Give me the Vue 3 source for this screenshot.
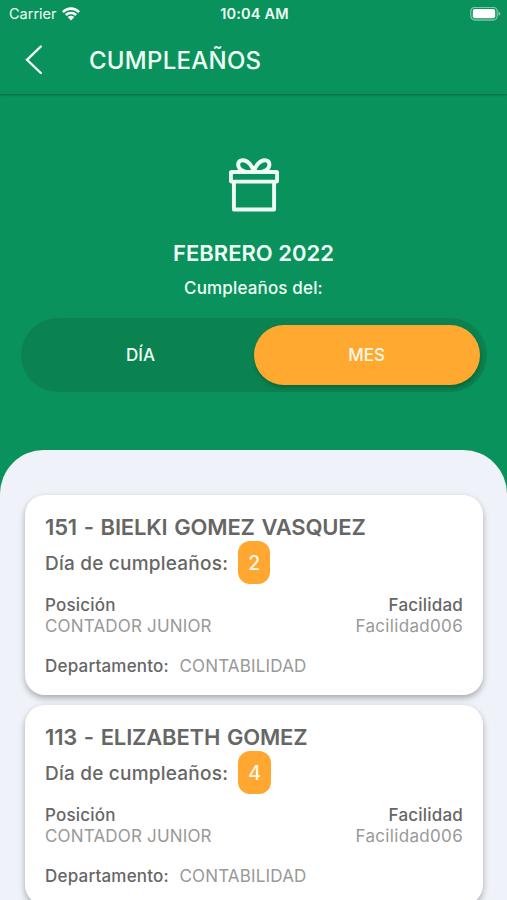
<script setup>
const people = [
  { code: '151', name: 'BIELKI GOMEZ VASQUEZ', day: 2, position: 'CONTADOR JUNIOR', facility: 'Facilidad006', department: 'CONTABILIDAD' },
  { code: '113', name: 'ELIZABETH GOMEZ', day: 4, position: 'CONTADOR JUNIOR', facility: 'Facilidad006', department: 'CONTABILIDAD' },
]
</script>

<template>
  <div class="screen">
    <header class="top">
      <div class="status">
        <div class="carrier">
          <span>Carrier</span>
          <svg class="wifi" viewBox="0 0 18 14" width="18" height="14">
            <path d="M0 4.200C5-1 13-1 18 4.200L16.200 6C12 1.900 6 1.900 1.800 6Z" />
            <path d="M2.900 7.100C6.300 3.800 11.700 3.800 15.100 7.100L13.300 8.900C10.900 6.700 7.100 6.700 4.700 8.900Z" />
            <path d="M5.700 10C7.700 8.200 10.300 8.200 12.300 10L9 13.400Z" />
          </svg>
        </div>
        <span class="time">10:04 AM</span>
        <svg class="battery" viewBox="0 0 32 14" width="32" height="14">
          <rect x="0.8" y="0.400" width="26.400" height="12.600" rx="4" class="shell" />
          <rect x="2.800" y="2.100" width="22.400" height="9.200" rx="2" class="charge" />
          <path d="M28.400 4.400C31 5.100 31 8.100 28.400 8.800Z" class="cap" />
        </svg>
      </div>
      <div class="nav">
        <svg class="back" viewBox="0 0 18 30" width="18" height="30">
          <path d="M15.800 1.500L2 14.800L15.800 28" />
        </svg>
        <h1>CUMPLEAÑOS</h1>
      </div>
    </header>

    <section class="hero">
      <svg class="gift" viewBox="0 0 50 54" width="50" height="54">
        <rect x="1.900" y="14" width="46.200" height="9.600" rx="0.800" />
        <path d="M4.900 23.800V51.500H45.100V23.800" />
        <path d="M24.800 14C23.800 8.500 18.500 1.200 12.500 2.400C7.800 3.600 8.300 10 12.800 12.200L17 14" />
        <path d="M24.800 14C25.800 8.500 31.100 1.200 37.100 2.400C41.800 3.600 41.300 10 36.800 12.200L32.600 14" />
      </svg>
      <h2>FEBRERO 2022</h2>
      <p>Cumpleaños del:</p>
      <div class="switch">
        <button class="option">DÍA</button>
        <button class="option active">MES</button>
      </div>
    </section>

    <main class="sheet">
      <article v-for="person in people" :key="person.code" class="card">
        <h3>{{ person.code }} - {{ person.name }}</h3>
        <div class="birthday">
          <span class="birthday-label">Día de cumpleaños:</span>
          <span class="day">{{ person.day }}</span>
        </div>
        <div class="details">
          <div>
            <div class="label">Posición</div>
            <div class="value">{{ person.position }}</div>
          </div>
          <div class="right">
            <div class="label">Facilidad</div>
            <div class="value facility">{{ person.facility }}</div>
          </div>
        </div>
        <div class="department">
          <span class="label">Departamento:</span>
          <span class="value">{{ person.department }}</span>
        </div>
      </article>
    </main>
  </div>
</template>

<style>
body {
  overflow: hidden;
}
</style>

<style scoped>
.screen {
  width: 507px;
  height: 900px;
  overflow: hidden;
  display: flex;
  flex-direction: column;
  background: #0a925c;
  font-family: Inter, 'Liberation Sans', sans-serif;
  color: #f0fff6;
}
.screen * {
  box-sizing: border-box;
}
h1, h2, h3, p {
  margin: 0;
  white-space: nowrap;
}
.top {
  flex: none;
  height: 94px;
  box-shadow: 0 1px 2px rgba(0, 50, 25, 0.45);
}
.status {
  display: grid;
  grid-template-columns: 1fr auto 1fr;
  align-items: center;
  height: 27px;
  padding: 0 5px 0 9px;
  font-size: 14.500px;
}
.carrier {
  display: flex;
  align-items: center;
  gap: 5px;
}
.wifi {
  fill: #fff;
}
.time {
  margin-left: -2px;
  font-weight: 600;
  font-size: 14.500px;
  letter-spacing: 0.200px;
}
.battery {
  justify-self: end;
}
.shell {
  fill: none;
  stroke: #7cc5a5;
  stroke-width: 1.300;
}
.charge {
  fill: #fff;
}
.cap {
  fill: #7cc5a5;
}
.nav {
  display: flex;
  align-items: center;
  height: 66px;
  padding-left: 25px;
}
.back {
  fill: none;
  stroke: #f0fff6;
  stroke-width: 2.400;
  stroke-linecap: round;
}
h1 {
  margin-left: 46px;
  padding-top: 1px;
  font-size: 24px;
  line-height: 30px;
  font-weight: 500;
  letter-spacing: 0.250px;
}
.hero {
  flex: none;
  height: 356px;
  display: flex;
  flex-direction: column;
  align-items: center;
  padding-top: 64px;
}
.gift {
  flex: none;
  fill: none;
  stroke: #f0fff6;
  stroke-width: 3.900;
  stroke-linejoin: round;
}
h2 {
  margin-top: 26px;
  font-size: 22px;
  line-height: 30px;
  font-weight: 600;
}
.hero p {
  margin-top: 8px;
  font-size: 17px;
  line-height: 24px;
  font-weight: 500;
  letter-spacing: 0.150px;
}
.switch {
  flex: none;
  display: flex;
  width: 466px;
  height: 74px;
  margin-top: 18px;
  padding: 6.500px 7px 6px 7px;
  border-radius: 37px;
  background: #0b8350;
}
.option {
  flex: 1;
  height: 60px;
  padding: 1.500px 0 0;
  border: 0;
  border-radius: 30px;
  background: transparent;
  color: inherit;
  font: 500 17px/59px Inter, 'Liberation Sans', sans-serif;
}
.option.active {
  background: #ffa931;
  color: #fff8e8;
  box-shadow: 1px 3px 4px rgba(0, 55, 20, 0.35);
}
.sheet {
  flex: none;
  height: 450px;
  padding: 44.500px 24px 0 25px;
  border-radius: 44px 44px 0 0;
  background: #eff2f8;
  display: flex;
  flex-direction: column;
  gap: 9.500px;
}
.card {
  flex: none;
  height: 200.500px;
  padding: 18.500px 20px 0;
  border-radius: 20px;
  background: #fff;
  box-shadow: 0 3px 6px rgba(0, 0, 0, 0.3);
  color: #666;
}
h3 {
  font-size: 22px;
  line-height: 28px;
  font-weight: 600;
  letter-spacing: -0.170px;
  word-spacing: 1.400px;
}
.birthday {
  display: flex;
  align-items: center;
  height: 43px;
  gap: 10px;
  font-size: 19px;
  font-weight: 500;
  white-space: nowrap;
}
.birthday-label {
  padding-top: 2px;
  letter-spacing: 0.220px;
}
.day {
  min-width: 32px;
  height: 43px;
  padding: 0 10px;
  border-radius: 12px;
  background: #ffa730;
  color: #fff8e8;
  font-size: 19.500px;
  line-height: 44px;
  text-align: center;
}
.details {
  display: flex;
  justify-content: space-between;
  margin-top: 11px;
  font-size: 17px;
  line-height: 21px;
}
.right {
  text-align: right;
}
.label {
  font-weight: 500;
  letter-spacing: 0.200px;
}
.value {
  color: #999;
  letter-spacing: 0.170px;
}
.facility {
  letter-spacing: 0.330px;
}
.department {
  display: flex;
  gap: 10.500px;
  margin-top: 19px;
  font-size: 17px;
  line-height: 21px;
}
</style>
